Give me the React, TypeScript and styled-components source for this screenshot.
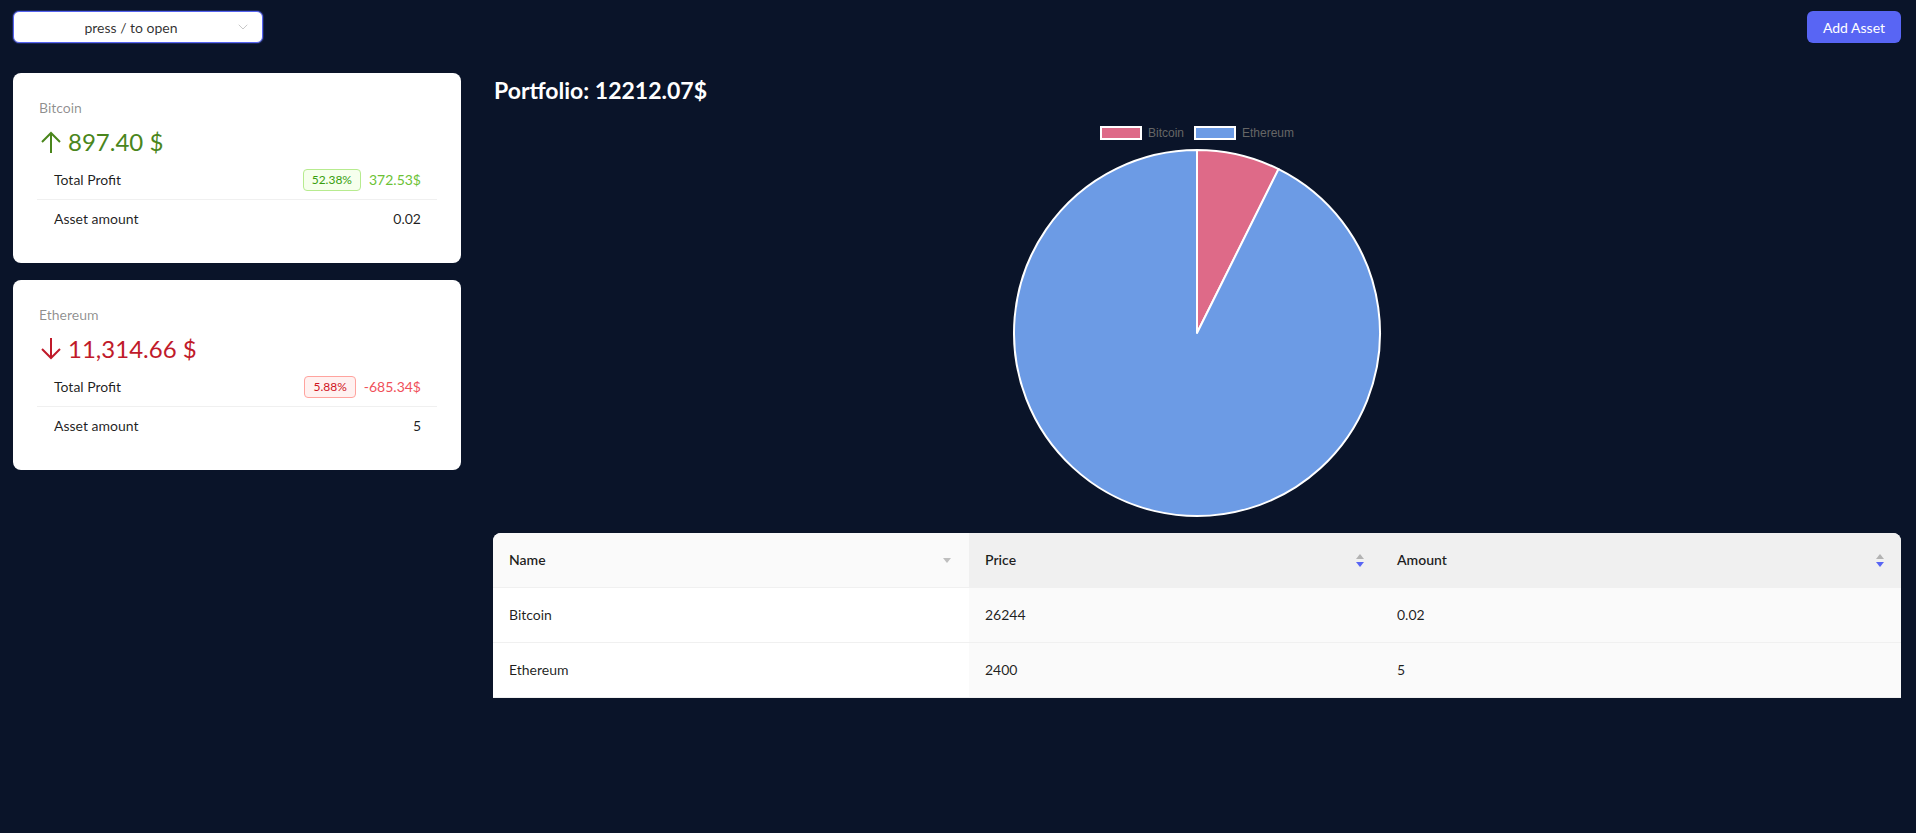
import { ChevronDown } from 'lucide-react'
import styled, { createGlobalStyle, css } from 'styled-components'

const GlobalStyle = createGlobalStyle`
  html, body {
    margin: 0;
    padding: 0;
    background: #0a1429;
    font-family: Lato, 'Noto Sans', sans-serif;
  }
  * {
    box-sizing: border-box;
  }
`

const Page = styled.div`
  min-height: 833px;
  background: #0a1429;
`

const TopBar = styled.header`
  display: flex;
  justify-content: space-between;
  align-items: center;
  padding: 11px 15px 0 13px;
`

const SearchSelect = styled.div`
  width: 250px;
  height: 32px;
  display: flex;
  align-items: center;
  background: #fff;
  border: 1px solid #5563f0;
  border-radius: 6px;
  box-shadow: 0 0 0 1px rgba(85, 99, 240, 0.25);
  padding: 0 11px;
  font-size: 14px;
  color: rgba(0, 0, 0, 0.82);
`

const SelectText = styled.span`
  flex: 1;
  text-align: center;
  padding-left: 2px;
`

const Chevron = styled(ChevronDown)`
  color: #c4c4c4;
  flex-shrink: 0;
`

const PrimaryButton = styled.button`
  height: 32px;
  padding: 0 16px;
  border: none;
  border-radius: 6px;
  background: #5865f4;
  color: #fff;
  font-family: inherit;
  font-size: 14px;
  cursor: pointer;
`

const Main = styled.main`
  display: flex;
  gap: 32px;
  padding: 30px 15px 0 13px;
  align-items: flex-start;
`

const Sider = styled.aside`
  width: 448px;
  flex-shrink: 0;
  display: flex;
  flex-direction: column;
  gap: 17px;
`

const Card = styled.section`
  background: #fff;
  border-radius: 8px;
  padding: 24px 24px 25px;
`

const CardTitle = styled.div`
  font-size: 14px;
  line-height: 22px;
  color: rgba(0, 0, 0, 0.45);
  margin-bottom: 4px;
  padding-left: 2px;
`

const StatValue = styled.div<{ $up: boolean }>`
  display: flex;
  align-items: center;
  gap: 6px;
  font-size: 24px;
  line-height: 38px;
  color: ${p => (p.$up ? '#4a861c' : '#c01a2a')};
  padding-left: 3px;
`

const List = styled.div`
  display: flex;
  flex-direction: column;
`

const ListItem = styled.div<{ $last?: boolean }>`
  display: flex;
  justify-content: space-between;
  align-items: center;
  padding: 8px 16px 8px 17px;
  font-size: 14px;
  line-height: 22px;
  color: rgba(0, 0, 0, 0.88);
  ${p =>
    !p.$last &&
    css`
      border-bottom: 1px solid rgba(5, 5, 5, 0.06);
    `}
`

const ProfitGroup = styled.div`
  display: flex;
  align-items: center;
  gap: 8px;
`

const Tag = styled.span<{ $up: boolean }>`
  font-size: 12px;
  line-height: 20px;
  padding: 0 8px;
  border-radius: 4px;
  border: 1px solid ${p => (p.$up ? '#b7eb8f' : '#ffa39e')};
  background: ${p => (p.$up ? '#f6ffed' : '#fff1f0')};
  color: ${p => (p.$up ? '#389e0d' : '#cf1322')};
`

const ProfitText = styled.span<{ $up: boolean }>`
  color: ${p => (p.$up ? '#6cc235' : '#f0505a')};
`

const Content = styled.div`
  flex: 1;
  min-width: 0;
  display: flex;
  flex-direction: column;
  align-items: stretch;
`

const PortfolioTitle = styled.h2`
  margin: 0;
  padding-left: 1px;
  font-size: 23px;
  line-height: 34px;
  font-weight: 700;
  color: #fff;
`

const Legend = styled.div`
  display: flex;
  justify-content: center;
  gap: 10px;
  margin-top: 19px;
  height: 14px;
`

const LegendItem = styled.div`
  display: flex;
  align-items: center;
  gap: 6px;
  font-family: 'Liberation Sans', Arial, sans-serif;
  font-size: 12px;
  color: #666;
`

const LegendBox = styled.span<{ $color: string }>`
  width: 42px;
  height: 14px;
  border: 2px solid #fff;
  background: ${p => p.$color};
`

const ChartWrap = styled.div`
  display: flex;
  justify-content: center;
  margin-top: 8px;
`

const Table = styled.table`
  margin-top: 15px;
  width: 100%;
  table-layout: fixed;
  border-collapse: separate;
  border-spacing: 0;
  font-size: 14px;
  color: rgba(0, 0, 0, 0.88);
  background: #fff;
  border-radius: 8px 8px 0 0;
  overflow: hidden;
`

const Th = styled.th<{ $sorted?: boolean }>`
  text-align: left;
  font-weight: 600;
  line-height: 22px;
  padding: 16px;
  background: ${p => (p.$sorted ? '#f0f0f0' : '#fafafa')};
  border-bottom: 1px solid #f0f0f0;
`

const ThInner = styled.div`
  display: flex;
  justify-content: space-between;
  align-items: center;
`

const Td = styled.td<{ $sorted?: boolean }>`
  line-height: 22px;
  padding: 16px;
  background: ${p => (p.$sorted ? '#fafafa' : '#fff')};
  border-bottom: 1px solid #f0f0f0;
`

const SorterIcon = styled.span`
  display: flex;
  flex-direction: column;
  gap: 3px;
  margin-right: 1px;
`

const Tri = styled.span<{ $dir: 'up' | 'down'; $color: string; $w?: number }>`
  width: 0;
  height: 0;
  border-left: ${p => (p.$w ?? 8) / 2}px solid transparent;
  border-right: ${p => (p.$w ?? 8) / 2}px solid transparent;
  ${p =>
    p.$dir === 'up'
      ? css`
          border-bottom: 5px solid ${p.$color};
        `
      : css`
          border-top: 5px solid ${p.$color};
        `}
`

const assets = [
  {
    name: 'Bitcoin',
    total: '897.40',
    up: true,
    percent: '52.38%',
    profit: '372.53$',
    amount: '0.02',
    price: '26244'
  },
  {
    name: 'Ethereum',
    total: '11,314.66',
    up: false,
    percent: '5.88%',
    profit: '-685.34$',
    amount: '5',
    price: '2400'
  }
]

const slices = [
  { label: 'Bitcoin', value: 897.4, color: '#de6a88' },
  { label: 'Ethereum', value: 11314.66, color: '#6c9be5' }
]

const Arrow = ({ up }: { up: boolean }) => (
  <svg width="22" height="22" viewBox="0 0 22 22" fill="none" stroke="currentColor" strokeWidth="2">
    {up ? (
      <>
        <polyline points="2,11 11,2 20,11" />
        <line x1="11" y1="2" x2="11" y2="22" />
      </>
    ) : (
      <>
        <polyline points="2,11 11,20 20,11" />
        <line x1="11" y1="0" x2="11" y2="20" />
      </>
    )}
  </svg>
)

const PieChart = () => {
  const cx = 185
  const cy = 185
  const r = 183
  const total = slices.reduce((s, x) => s + x.value, 0)
  let start = 0
  return (
    <svg width="370" height="370" viewBox="0 0 370 370">
      {slices.map(s => {
        const a0 = (start / total) * Math.PI * 2
        start += s.value
        const a1 = (start / total) * Math.PI * 2
        const x0 = cx + r * Math.sin(a0)
        const y0 = cy - r * Math.cos(a0)
        const x1 = cx + r * Math.sin(a1)
        const y1 = cy - r * Math.cos(a1)
        const large = a1 - a0 > Math.PI ? 1 : 0
        return (
          <path
            key={s.label}
            d={`M${cx} ${cy} L${x0} ${y0} A${r} ${r} 0 ${large} 1 ${x1} ${y1} Z`}
            fill={s.color}
            stroke="#fff"
            strokeWidth="2"
            strokeLinejoin="round"
          />
        )
      })}
    </svg>
  )
}

const App = () => {
  return (
    <Page>
      <GlobalStyle />
      <TopBar>
        <SearchSelect>
          <SelectText>press / to open</SelectText>
          <Chevron size={16} strokeWidth={1.4} />
        </SearchSelect>
        <PrimaryButton>Add Asset</PrimaryButton>
      </TopBar>
      <Main>
        <Sider>
          {assets.map(a => (
            <Card key={a.name}>
              <CardTitle>{a.name}</CardTitle>
              <StatValue $up={a.up}>
                <Arrow up={a.up} />
                <span>{a.total} $</span>
              </StatValue>
              <List>
                <ListItem>
                  <span>Total Profit</span>
                  <ProfitGroup>
                    <Tag $up={a.up}>{a.percent}</Tag>
                    <ProfitText $up={a.up}>{a.profit}</ProfitText>
                  </ProfitGroup>
                </ListItem>
                <ListItem $last>
                  <span>Asset amount</span>
                  <span>{a.amount}</span>
                </ListItem>
              </List>
            </Card>
          ))}
        </Sider>
        <Content>
          <PortfolioTitle>Portfolio: 12212.07$</PortfolioTitle>
          <Legend>
            {slices.map(s => (
              <LegendItem key={s.label}>
                <LegendBox $color={s.color} />
                {s.label}
              </LegendItem>
            ))}
          </Legend>
          <ChartWrap>
            <PieChart />
          </ChartWrap>
          <Table>
            <colgroup>
              <col style={{ width: 476 }} />
              <col style={{ width: 412 }} />
              <col />
            </colgroup>
            <thead>
              <tr>
                <Th>
                  <ThInner>
                    Name
                    <SorterIcon style={{ marginRight: 2 }}>
                      <Tri $dir="down" $color="#bfbfbf" $w={8} />
                    </SorterIcon>
                  </ThInner>
                </Th>
                <Th $sorted>
                  <ThInner>
                    Price
                    <SorterIcon>
                      <Tri $dir="up" $color="#b3b3b3" />
                      <Tri $dir="down" $color="#5865f4" />
                    </SorterIcon>
                  </ThInner>
                </Th>
                <Th $sorted>
                  <ThInner>
                    Amount
                    <SorterIcon>
                      <Tri $dir="up" $color="#b3b3b3" />
                      <Tri $dir="down" $color="#5865f4" />
                    </SorterIcon>
                  </ThInner>
                </Th>
              </tr>
            </thead>
            <tbody>
              {assets.map(a => (
                <tr key={a.name}>
                  <Td>{a.name}</Td>
                  <Td $sorted>{a.price}</Td>
                  <Td $sorted>{a.amount}</Td>
                </tr>
              ))}
            </tbody>
          </Table>
        </Content>
      </Main>
    </Page>
  )
}

export default App
